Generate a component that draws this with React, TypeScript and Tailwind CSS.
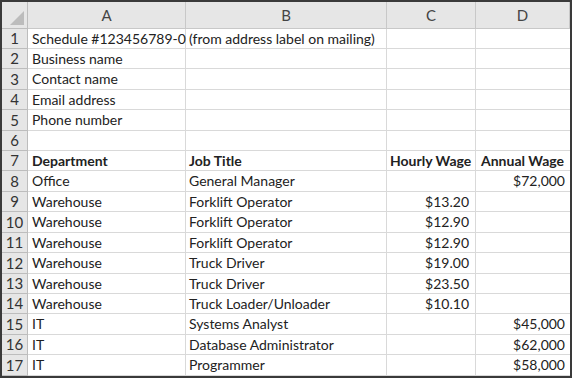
import React from "react";

type Row = { a?: string; b?: string; c?: string; d?: string; bold?: boolean };

const rows: Row[] = [
  { a: "Schedule #123456789-0", b: "(from address label on mailing)" },
  { a: "Business name" },
  { a: "Contact name" },
  { a: "Email address" },
  { a: "Phone number" },
  {},
  { a: "Department", b: "Job Title", c: "Hourly Wage", d: "Annual Wage", bold: true },
  { a: "Office", b: "General Manager", d: "$72,000" },
  { a: "Warehouse", b: "Forklift Operator", c: "$13.20" },
  { a: "Warehouse", b: "Forklift Operator", c: "$12.90" },
  { a: "Warehouse", b: "Forklift Operator", c: "$12.90" },
  { a: "Warehouse", b: "Truck Driver", c: "$19.00" },
  { a: "Warehouse", b: "Truck Driver", c: "$23.50" },
  { a: "Warehouse", b: "Truck Loader/Unloader", c: "$10.10" },
  { a: "IT", b: "Systems Analyst", d: "$45,000" },
  { a: "IT", b: "Database Administrator", d: "$62,000" },
  { a: "IT", b: "Programmer", d: "$58,000" },
];

const tall = new Set([3, 5, 8, 10, 12, 15, 17]);

export default function App() {
  return (
    <div
      className="w-[572px] h-[378px] border-2 border-[#3a3a3a] bg-white text-[#222] overflow-hidden"
      style={{ fontFamily: "Lato, 'Open Sans', sans-serif" }}
    >
      <div className="flex h-[27px] bg-[#e6e6e6] text-[#444] text-[15px]">
        <div className="w-[26px] border-r border-b border-[#bdbdbd] relative">
          <svg className="absolute right-[3px] bottom-[3px]" width="14" height="14" viewBox="0 0 14 14">
            <polygon points="14,0 14,14 0,14" fill="#bcbcbc" />
          </svg>
        </div>
        {[
          ["A", "w-[158px]"],
          ["B", "w-[201px]"],
          ["C", "w-[89px]"],
          ["D", "w-[94px]"],
        ].map(([l, w]) => (
          <div
            key={l}
            className={`${w} flex items-center justify-center border-r border-b border-[#c8c8c8]`}
          >
            {l}
          </div>
        ))}
      </div>
      {rows.map((r, i) => {
        const n = i + 1;
        const h = tall.has(n) ? "h-[21px]" : "h-[20px]";
        const weight = r.bold ? "font-bold" : "";
        return (
          <div key={n} className={`flex ${h} text-[14px] leading-none`}>
            <div className="w-[26px] bg-[#e6e6e6] text-[#333] text-[15px] border-r border-b border-[#bdbdbd] flex items-center justify-center">
              {n}
            </div>
            <div className={`w-[158px] border-r border-b border-[#d9d9d9] flex items-center pl-[4px] whitespace-nowrap ${weight}`}>
              {r.a}
            </div>
            <div className={`w-[201px] border-r border-b border-[#d9d9d9] flex items-center pl-[3px] whitespace-nowrap ${weight}`}>
              {r.b}
            </div>
            <div
              className={`w-[89px] border-r border-b border-[#d9d9d9] flex items-center whitespace-nowrap ${
                r.bold ? "justify-start pl-[3px] font-bold" : "justify-end pr-[6px]"
              }`}
            >
              {r.c}
            </div>
            <div
              className={`w-[94px] border-b border-[#d9d9d9] flex items-center whitespace-nowrap ${
                r.bold ? "justify-start pl-[5px] font-bold" : "justify-end pr-[5px]"
              }`}
            >
              {r.d}
            </div>
          </div>
        );
      })}
    </div>
  );
}
